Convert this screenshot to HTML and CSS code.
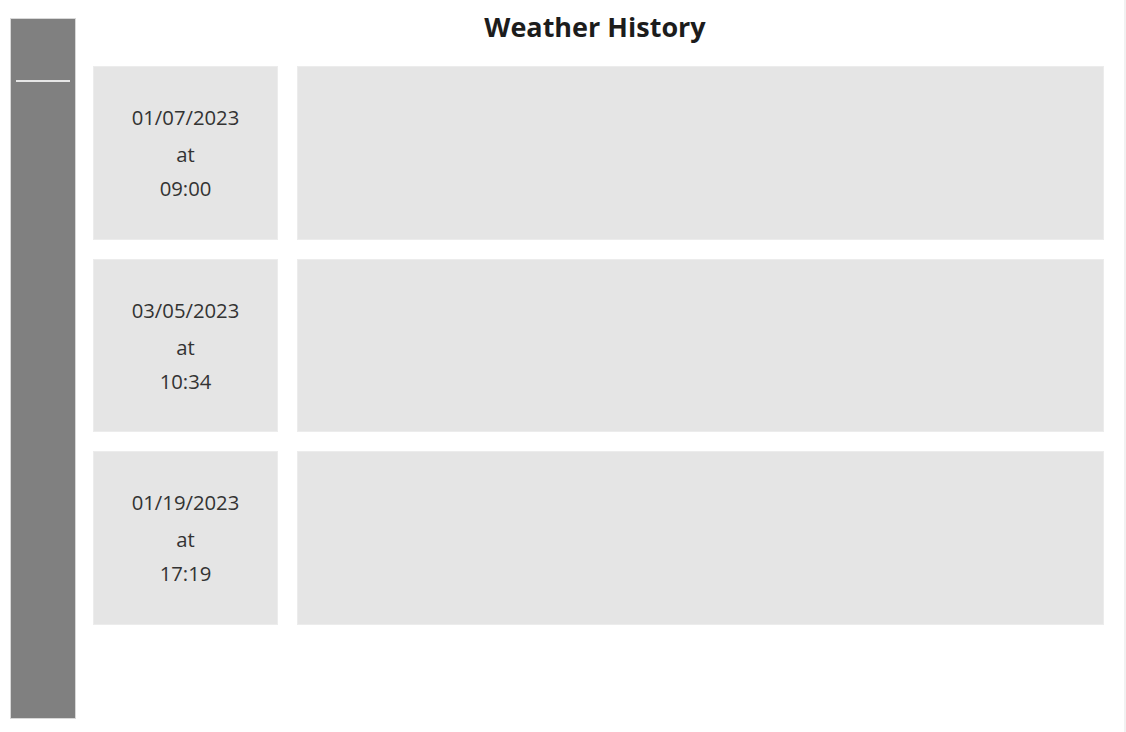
FILE: index.html
```html
<!DOCTYPE html>
<html lang="en">
<head>
<meta charset="utf-8">
<title>Weather History</title>
<link rel="stylesheet" href="styles.css">
</head>
<body>
<div class="page">
  <aside class="sidebar">
    <div class="sidebar-rule"></div>
  </aside>
  <main class="main">
    <h1 class="title">Weather History</h1>
    <div class="entries">
      <div class="entry">
        <div class="when">
          <div class="line">01/07/2023</div>
          <div class="line at">at</div>
          <div class="line">09:00</div>
        </div>
        <div class="details"></div>
      </div>
      <div class="entry">
        <div class="when">
          <div class="line">03/05/2023</div>
          <div class="line at">at</div>
          <div class="line">10:34</div>
        </div>
        <div class="details"></div>
      </div>
      <div class="entry">
        <div class="when">
          <div class="line">01/19/2023</div>
          <div class="line at">at</div>
          <div class="line">17:19</div>
        </div>
        <div class="details"></div>
      </div>
    </div>
  </main>
</div>
</body>
</html>
```

FILE: styles.css
```css
* {
  box-sizing: border-box;
}

html, body {
  margin: 0;
  padding: 0;
  background: #ffffff;
}

body {
  font-family: "Open Sans", "Liberation Sans", sans-serif;
  color: #333333;
}

.page {
  display: flex;
  width: 1126px;
  height: 732px;
  border-right: 2px solid #f1f1f1;
}

.sidebar {
  flex: 0 0 66px;
  height: 701px;
  margin: 18px 0 0 10px;
  background: #808080;
  border: 1px solid #d8d8d8;
  padding: 61px 5px 0;
}

.sidebar-rule {
  height: 2px;
  background: #e6e6e6;
}

.main {
  flex: 1;
  margin: 0 20px 0 17px;
  display: flex;
  flex-direction: column;
}

.title {
  margin: 0;
  height: 66px;
  padding: 9px 7px 0 0;
  font-size: 27px;
  line-height: 36px;
  font-weight: 700;
  color: #1c1c1c;
  text-align: center;
}

.entries {
  display: flex;
  flex-direction: column;
  gap: 19px;
}

.entry {
  display: grid;
  grid-template-columns: 185px 1fr;
  gap: 19px;
  height: 173.5px;
}

.when,
.details {
  background: #e5e5e5;
  border: 1px solid #ececec;
}

.when {
  display: flex;
  flex-direction: column;
  justify-content: center;
  align-items: center;
  font-size: 20.3px;
  color: #333333;
}

.line {
  line-height: 34px;
}

.line.at {
  margin-top: 3px;
}
```
